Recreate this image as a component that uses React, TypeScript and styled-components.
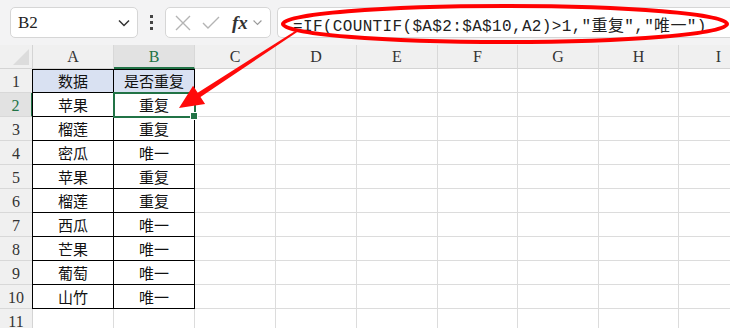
import React from 'react'
import styled, { createGlobalStyle } from 'styled-components'

const GlobalStyle = createGlobalStyle`
    html, body { margin: 0; padding: 0; background: #ffffff; }
    body { font-family: "Liberation Sans", "Noto Sans CJK SC", sans-serif; overflow: hidden; }
`;

const GREEN = '#217346';
const COLS = ['A', 'B', 'C', 'D', 'E', 'F', 'G', 'H', 'I'];
const TEMPLATE = '33px 81px 81px 81px 81px 81px 80px 81px 80px 80px';

const data: [string, string][] = [
    ['数据', '是否重复'],
    ['苹果', '重复'],
    ['榴莲', '重复'],
    ['密瓜', '唯一'],
    ['苹果', '重复'],
    ['榴莲', '重复'],
    ['西瓜', '唯一'],
    ['芒果', '唯一'],
    ['葡萄', '唯一'],
    ['山竹', '唯一'],
];

const App = () => {
    return (
        <Page>
            <GlobalStyle />
            {/* Formula toolbar */}
            <Toolbar>
                <NameBox>
                    <NameText>B2</NameText>
                    <Chevron size={14} />
                </NameBox>
                <Dots>
                    <i /><i /><i />
                </Dots>
                <ActionBox>
                    <svg width="18" height="18" viewBox="0 0 18 18">
                        <path d="M2 2 L16 16 M16 2 L2 16" stroke="#b4b4b4" strokeWidth="1.4" fill="none" />
                    </svg>
                    <svg width="20" height="18" viewBox="0 0 20 18">
                        <path d="M2 9 L7 14 L18 3" stroke="#b4b4b4" strokeWidth="1.4" fill="none" />
                    </svg>
                    <Fx>fx</Fx>
                    <Chevron size={11} light />
                </ActionBox>
                <FormulaBox>
                    <FormulaText>=IF(COUNTIF($A$2:$A$10,A2)&gt;1,"重复","唯一")</FormulaText>
                </FormulaBox>
            </Toolbar>

            {/* Sheet */}
            <Sheet>
                <Row>
                    <Corner>
                        <svg width="16" height="16" viewBox="0 0 16 16">
                            <polygon points="16,0 16,16 0,16" fill="#dcdcdc" />
                        </svg>
                    </Corner>
                    {COLS.map((c) => (
                        <ColHead key={c} active={c === 'B'}>{c}</ColHead>
                    ))}
                </Row>
                {Array.from({ length: 11 }).map((_, r) => {
                    const rowNo = r + 1;
                    const item = data[r];
                    return (
                        <Row key={rowNo}>
                            <RowHead active={rowNo === 2}>{rowNo}</RowHead>
                            {COLS.map((c, ci) => {
                                const inData = !!item && ci < 2;
                                return (
                                    <Cell
                                        key={c}
                                        data={inData}
                                        first={inData && ci === 0}
                                        top={rowNo === 1 && ci < 2}
                                        head={rowNo === 1 && ci < 2}
                                        selected={rowNo === 2 && c === 'B'}
                                    >
                                        {inData ? item[ci] : ''}
                                        {rowNo === 2 && c === 'B' && <Handle />}
                                    </Cell>
                                );
                            })}
                        </Row>
                    );
                })}
            </Sheet>

            {/* Annotation */}
            <Overlay width="730" height="328" viewBox="0 0 730 328">
                <ellipse cx="505" cy="24" rx="222" ry="18" fill="none" stroke="#ff0000" strokeWidth="4" />
                <polygon
                    points="297.6,31.8 200.5,97.0 205.1,104.1 179,108 193.1,85.7 197.7,92.8 296.4,30.2"
                    fill="#ff0a0a"
                />
            </Overlay>
        </Page>
    )
}

export default App

const Chevron = ({ size, light }: { size: number; light?: boolean }) => (
    <svg width={size} height={size} viewBox="0 0 14 14" style={{ flexShrink: 0 }}>
        <path d="M2 4.5 L7 9.5 L12 4.5" stroke={light ? '#9a9a9a' : '#333'} strokeWidth="1.5" fill="none" />
    </svg>
);

const Page = styled.div`
    position: relative;
    width: 730px;
    height: 328px;
    overflow: hidden;
`;

const Toolbar = styled.div`
    height: 45px;
    background: #f3f3f4;
    display: flex;
    align-items: center;
    padding-left: 10px;
    box-sizing: border-box;
`;

const BoxBase = styled.div`
    height: 31px;
    box-sizing: border-box;
    background: #ffffff;
    border: 1px solid #d6d6d6;
    border-radius: 5px;
    display: flex;
    align-items: center;
`;

const NameBox = styled(BoxBase)`
    width: 128px;
    padding: 0 6px 0 7px;
    justify-content: space-between;
`;

const NameText = styled.span`
    font-family: "Liberation Serif", serif;
    font-size: 17px;
    color: #222;
`;

const Dots = styled.div`
    width: 27px;
    display: flex;
    flex-direction: column;
    align-items: center;
    gap: 3px;
    i {
        display: block;
        width: 3px;
        height: 3px;
        background: #444;
    }
`;

const ActionBox = styled(BoxBase)`
    width: 106px;
    padding: 0 4px 0 8px;
    gap: 9px;
`;

const Fx = styled.span`
    font-family: "Liberation Serif", serif;
    font-style: italic;
    font-weight: bold;
    font-size: 19px;
    color: #333;
    margin-left: 2px;
    margin-right: -5px;
`;

const FormulaBox = styled(BoxBase)`
    margin-left: 6px;
    flex: 1;
    border-right: none;
    border-radius: 5px 0 0 5px;
    padding-left: 15px;
`;

const FormulaText = styled.span`
    font-family: "Liberation Mono", "Noto Sans CJK SC", monospace;
    font-size: 16px;
    letter-spacing: 0.35px;
    color: #222;
    white-space: nowrap;
    position: relative;
    top: 1px;
`;

const Sheet = styled.div`
    display: flex;
    flex-direction: column;
`;

const Row = styled.div`
    display: grid;
    grid-template-columns: ${TEMPLATE};
    height: 24px;
`;

const Corner = styled.div`
    background: #f0f0f0;
    border-right: 1px solid #d4d4d4;
    border-bottom: 1px solid #d4d4d4;
    box-sizing: border-box;
    display: flex;
    align-items: flex-end;
    justify-content: flex-end;
    padding: 0 3px 3px 0;
`;

const ColHead = styled.div<{ active?: boolean }>`
    box-sizing: border-box;
    background: ${(p) => (p.active ? '#e2e2e2' : '#f0f0f0')};
    border-right: 1px solid #d8d8d8;
    border-bottom: ${(p) => (p.active ? `2px solid ${GREEN}` : '1px solid #d4d4d4')};
    display: flex;
    align-items: center;
    justify-content: center;
    font-family: "Liberation Serif", serif;
    font-size: 16px;
    color: ${(p) => (p.active ? GREEN : '#333')};
    padding-top: ${(p) => (p.active ? '1px' : '0')};
`;

const RowHead = styled.div<{ active?: boolean }>`
    box-sizing: border-box;
    background: ${(p) => (p.active ? '#e2e2e2' : '#f0f0f0')};
    border-right: ${(p) => (p.active ? `2px solid ${GREEN}` : '1px solid #d4d4d4')};
    border-bottom: 1px solid #d8d8d8;
    display: flex;
    align-items: center;
    justify-content: center;
    font-family: "Liberation Serif", serif;
    font-size: 16px;
    color: ${(p) => (p.active ? GREEN : '#333')};
    padding-top: 2px;
`;

const Cell = styled.div<{ data?: boolean; first?: boolean; top?: boolean; head?: boolean; selected?: boolean }>`
    position: relative;
    box-sizing: border-box;
    background: ${(p) => (p.head ? '#d9e1f2' : '#ffffff')};
    border-right: 1px solid ${(p) => (p.data ? '#000' : '#dcdcdc')};
    border-bottom: 1px solid ${(p) => (p.data ? '#000' : '#dcdcdc')};
    border-left: ${(p) => (p.first ? '1px solid #000' : 'none')};
    margin-left: ${(p) => (p.first ? '-1px' : '0')};
    box-shadow: ${(p) => (p.top ? 'inset 0 1px 0 #000' : 'none')};
    display: flex;
    align-items: center;
    justify-content: center;
    font-family: "Noto Sans CJK SC", sans-serif;
    font-size: 15px;
    color: #111;
    outline: ${(p) => (p.selected ? `2px solid ${GREEN}` : 'none')};
    outline-offset: -1px;
    z-index: ${(p) => (p.selected ? 2 : 0)};
`;

const Handle = styled.span`
    position: absolute;
    right: -4px;
    bottom: -4px;
    width: 6px;
    height: 6px;
    background: ${GREEN};
    border: 1px solid #fff;
`;

const Overlay = styled.svg`
    position: absolute;
    left: 0;
    top: 0;
    pointer-events: none;
    z-index: 5;
`;
